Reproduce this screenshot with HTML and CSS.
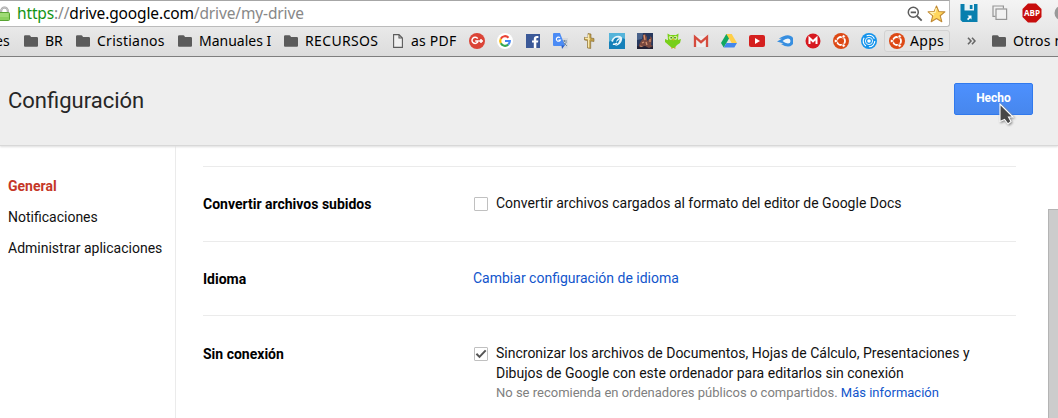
FILE: index.html
```html
<!DOCTYPE html>
<html lang="es">
<head>
<meta charset="utf-8">
<title>Configuración</title>
<link rel="stylesheet" href="styles.css">
</head>
<body>
<svg class="defs" width="0" height="0">
  <defs>
    <symbol id="folder" viewBox="0 0 14 12"><path d="M0 1.5Q0 .3 1.2 .3H5.2Q6.2 .3 6.6 1.3L7 2H12.8Q14 2 14 3.2V10.8Q14 11.8 13 11.8H1Q0 11.8 0 10.8Z" fill="#5b5b5b"/></symbol>
    <symbol id="ubuntu" viewBox="0 0 16 16"><circle cx="8" cy="8" r="8" fill="#dd4814"/><circle cx="8" cy="8" r="4" fill="none" stroke="#fff" stroke-width="1.8"/><g fill="#fff" stroke="#dd4814" stroke-width=".8"><circle cx="2.8" cy="8" r="1.7"/><circle cx="10.6" cy="3.4" r="1.7"/><circle cx="10.6" cy="12.6" r="1.7"/></g></symbol>
  </defs>
</svg>
<header class="browser">
  <div class="toolbar">
    <div class="address">
      <svg class="lock" width="10" height="16" viewBox="0 0 10 16"><path d="M1.2 8V4.7a3.3 3.3 0 0 1 6.6 0V8" fill="none" stroke="#999" stroke-width="2"/><path d="M1.2 8V4.7a3.3 3.3 0 0 1 6.6 0V8" fill="none" stroke="#ddd" stroke-width=".7"/><rect x="-3" y="6.5" width="12.5" height="8" rx="1" fill="#8bd05f" stroke="#58a433"/><path d="M0 8H8.5M0 10H8.5" stroke="#b3e58e"/></svg>
      <span class="url"><span class="scheme">https</span><span class="dim">://</span>drive.google.com<span class="dim">/drive/my-drive</span></span>
      <svg class="zoomicon" width="16" height="16" viewBox="0 0 16 16"><circle cx="6.3" cy="6.3" r="5" fill="none" stroke="#5c5c5c" stroke-width="1.5"/><path d="M3.7 6.3H9M10 10l4.7 4.7" stroke="#5c5c5c" stroke-width="1.8"/></svg>
      <svg class="star" width="19" height="18" viewBox="0 0 19 18"><path d="M9.5 1l2.3 5.5 6.1.4-4.7 3.8 1.6 6-5.3-3.2-5.3 3.2 1.6-6L1.1 6.9l6.1-.4z" fill="#ffd65c" stroke="#c18a35" stroke-width="1.1" stroke-linejoin="round"/><path d="M9.3 3L8 7.4 3.7 7.8l3.4 2.5" fill="none" stroke="#fff2b4" stroke-width="1.2"/></svg>
    </div>
    <div class="extensions">
      <svg width="18" height="18" viewBox="0 0 18 18"><path d="M.5 0H17.5V18H2.5L.5 16z" fill="#087fae"/><path d="M4.5 0H14V6.5H4.5z" fill="#e9f3f6"/><path d="M9.8 1H12.5V5H9.8z" fill="#087fae"/><path d="M7.5 11.5H11.5V15.5L10.2 14.3 8.2 16.2 7 15 9 13z" fill="#fff"/></svg>
      <svg width="16" height="16" viewBox="0 0 16 16" fill="none" stroke="#969696" stroke-width="1.2"><path d="M3.5 11.4H1V1H11.4V3.5"/><rect x="4" y="4" width="10.6" height="10.4" fill="#f2f2f2"/></svg>
      <svg width="20" height="20" viewBox="0 0 20 20"><path d="M6 .5h8L19.5 6v8L14 19.5H6L.5 14V6z" fill="#c70d0c"/><text class="abp" x="10" y="13.4" text-anchor="middle" textLength="16" lengthAdjust="spacingAndGlyphs">ABP</text></svg>
      <svg class="edge" width="4" height="16" viewBox="0 0 4 16"><circle cx="8" cy="8" r="7.5" fill="#999"/></svg>
    </div>
  </div>
  <nav class="bookmarks">
    <span class="bm-text cut">es</span>
    <svg class="folder"><use href="#folder"/></svg><span class="bm-text br">BR</span>
    <svg class="folder"><use href="#folder"/></svg><span class="bm-text cristianos">Cristianos</span>
    <svg class="folder"><use href="#folder"/></svg><span class="bm-text manuales">Manuales I</span>
    <svg class="folder"><use href="#folder"/></svg><span class="bm-text recursos">RECURSOS</span>
    <svg class="page" width="10" height="14" viewBox="0 0 10 14"><path d="M.6.6H6L9.4 4V13.4H.6zM6 .6V4H9.4" fill="#f0f0f0" stroke="#5b5b5b" stroke-width="1.1"/></svg><span class="bm-text pdf">as PDF</span>
    <div class="favicons">
      <svg viewBox="0 0 16 16"><circle cx="8" cy="8" r="8" fill="#db4437"/><path d="M8.7 5.6A3.1 3.1 0 1 0 9.1 8H6.2M10 8h4M12 6v4" fill="none" stroke="#fff" stroke-width="1.5"/></svg>
      <svg viewBox="0 0 16 16"><circle cx="8" cy="8" r="8" fill="#fff"/><g fill="none" stroke-width="2.2"><path d="M11.5 4.7A4.8 4.8 0 0 0 3.8 5.7" stroke="#ea4335"/><path d="M3.8 5.7a4.8 4.8 0 0 0 0 4.6" stroke="#fbbc05"/><path d="M3.8 10.3a4.8 4.8 0 0 0 7.4 1.3" stroke="#34a853"/><path d="M11.2 11.6A4.8 4.8 0 0 0 12.8 8H8" stroke="#4285f4"/></g></svg>
      <svg viewBox="0 0 16 16"><path d="M1 1H15V15H1z" fill="#3b5998"/><path d="M8.8 15V9.6H7V7.4h1.8V6c0-2 1.2-3 3-3h1.6v2.1h-1.1c-.8 0-1 .4-1 1.1v1.2h2l-.3 2.2h-1.7V15z" fill="#fff"/></svg>
      <svg viewBox="0 0 16 16"><path d="M7 5h8v10.5H9z" fill="#d5d8dc"/><path d="M9 8h5M11.5 7v2M10 13l3.5-4M10 9l4 4" stroke="#748aa0" fill="none"/><path d="M0 1Q0 0 1 0H7L12 13H1Q0 13 0 12z" fill="#4b8bf5"/><path d="M8.5 12.5h3L9 16z" fill="#2a5bc2"/><path d="M7 4.7A2.1 2.1 0 1 0 7.4 7H5.4" stroke="#fff" fill="none" stroke-width="1.2"/></svg>
      <svg viewBox="0 0 16 16"><path d="M7 .5L10 1V5l3 .5v3L9.7 8v7.5L6.5 15V7.5L3.5 7V4.3L7 5z" fill="#c0a04b" stroke="#83672c" stroke-width=".6"/><path d="M7.6 1.5v13M4 5.2l5 1" stroke="#f8e9af" stroke-width="1.3"/></svg>
      <svg viewBox="0 0 16 16"><path d="M0 0H16V16H0z" fill="#1680b9"/><path d="M0 0H16V6Q7 2 0 9z" fill="#55b4da"/><path d="M2 8Q5 2 11 3Q14 4 13 7Q12 12 6 13Q10 10 11 6L7 9Q8 5 11 5Q5 3 4 9z" fill="#eaf6fb"/><path d="M4 11Q6 12 8 10" fill="none" stroke="#fff" stroke-width="1.5"/></svg>
      <svg viewBox="0 0 16 16"><path d="M0 0H16V16H0z" fill="#28385d"/><path d="M0 0H6L5 6 0 7z" fill="#49628a"/><path d="M2 12L4 8 6 6 6 2 8 1 10 4 10 8 13 6 13 3 15 5 14 12 16 13V16H2z" fill="#79483f"/><path d="M7 2l1 5M5 10l2-1M9 9l1 3M13 6v3M3 13l3 1" stroke="#d69371" stroke-width="1.3"/><path d="M0 13L4 14 8 13 12 15 16 13V16H0z" fill="#222034"/></svg>
      <svg viewBox="0 0 16 16"><path d="M2.5.5L5 2h6l2.5-1.5L13 7l3-1-1 4-3 2-2.5 3H7l-3.5-3L0 9V6l3 1.3z" fill="#78cf19"/><circle cx="5.8" cy="4.8" r="2.1" fill="#cff48f"/><circle cx="10.4" cy="4.8" r="2.1" fill="#cff48f"/><circle cx="6.2" cy="4.8" r=".8" fill="#36501c"/><circle cx="10" cy="4.8" r=".8" fill="#36501c"/><path d="M7 6h2.4L8.2 7.8z" fill="#f5a623"/><path d="M6 15h1.7M9 15h1.7" stroke="#d69b20" stroke-width="1.2"/></svg>
      <svg viewBox="0 0 16 16"><path d="M1 3H15V14H1z" fill="#eee"/><path d="M2 14V4l6 5.2L14 4v10" fill="none" stroke="#d54b3d" stroke-width="2.3"/></svg>
      <svg viewBox="0 0 16 16"><path d="M5.3 1h5.3L5.4 10 2.7 14.6 0 10z" fill="#11a861"/><path d="M5.3 1h5.4L16 10h-5.3z" fill="#ffcf48"/><path d="M5.4 10H16l-2.7 4.6H2.7z" fill="#4387ed"/></svg>
      <svg viewBox="0 0 16 16"><rect y="2" width="16" height="12" rx="2" fill="#d5201f"/><path d="M6 5l5 3-5 3z" fill="#fff"/></svg>
      <svg viewBox="0 0 16 16"><path d="M0 8.5L5 5.8H1.8Q7 2 11 2.2A5.7 5.7 0 0 1 11 13.6Q8 13.5 4 11L6.5 10.6Z" fill="#368ee0"/><path d="M5.5 8Q8 5.4 11 5.4a2.5 2.5 0 0 1 0 5Q8 10.4 5.5 8z" fill="#f1f6fa"/></svg>
      <svg viewBox="0 0 16 16"><circle cx="8" cy="8" r="7.5" fill="#d71920"/><path d="M4.5 11V5L8 8.3 11.5 5v6" fill="none" stroke="#fff" stroke-width="2"/></svg>
      <svg><use href="#ubuntu"/></svg>
      <svg viewBox="0 0 16 16"><circle cx="8" cy="8" r="8" fill="#1594ec"/><circle cx="8" cy="8" r="1.8" fill="#fff"/><g fill="none" stroke="#fff"><circle cx="8" cy="8" r="3.6" stroke-width=".9"/><circle cx="8" cy="8" r="5.8" stroke-width="1.1" stroke-dasharray="9 3.1"/></g></svg>
    </div>
    <div class="apps"><svg width="16" height="16"><use href="#ubuntu"/></svg><span class="bm-text">Apps</span></div>
    <svg class="chevrons" width="9" height="8" viewBox="0 0 9 8"><path d="M1 .7L4 4 1 7.3M5 .7L8 4 5 7.3" fill="none" stroke="#666" stroke-width="1.6"/></svg>
    <div class="separator"></div>
    <svg class="folder"><use href="#folder"/></svg><span class="bm-text otros">Otros m</span>
  </nav>
</header>
<div class="dialog-head">
  <h1>Configuración</h1>
  <button class="done">Hecho</button>
  <svg class="cursor" width="16" height="24" viewBox="0 0 16 24"><path d="M1 1V18.5L5.5 16.5 9 21 12 18.5 9.5 14H14z" fill="#484848" stroke="#fff" stroke-width="1.1"/></svg>
</div>
<div class="content">
  <nav class="sidebar"><a class="active">General</a><a>Notificaciones</a><a>Administrar aplicaciones</a></nav>
  <main>
    <section class="row"><h2>Convertir archivos subidos</h2><div class="option"><span class="box"></span><div class="label convert">Convertir archivos cargados al formato del editor de Google Docs</div></div></section>
    <section class="row"><h2>Idioma</h2><a class="link">Cambiar configuración de idioma</a></section>
    <section class="row"><h2>Sin conexión</h2><div class="option"><span class="box"><svg width="14" height="14" viewBox="0 0 14 14"><path d="M2.4 6.7l3.1 3.2 6.2-6.5" fill="none" stroke="#555" stroke-width="2"/></svg></span><div class="label">Sincronizar los archivos de Documentos, Hojas de Cálculo, Presentaciones y<br>Dibujos de Google con este ordenador para editarlos sin conexión<p>No se recomienda en ordenadores públicos o compartidos. <a class="link">Más información</a></p></div></div></section>
  </main>
  <div class="scroll"><div class="thumb"></div></div>
</div>
</body>
</html>
```

FILE: styles.css
```css
* { box-sizing: border-box; }
body { margin: 0; width: 1058px; height: 418px; overflow: hidden; background: #fff; font: 14px/20px Roboto, sans-serif; color: #111; }
svg { display: block; flex: none; }
.defs { position: absolute; }
.browser { height: 57px; background: linear-gradient(#f4f4f4, #e9e9e9 27px, #dcdcdc 56px); border-bottom: 1px solid #777; font-family: "Noto Sans", sans-serif; }
.toolbar { display: flex; height: 27px; }
.address { display: flex; align-items: center; width: 950px; height: 27px; background: #fff; border: 1px solid #bbb; border-top-color: #a6a6a6; border-left: 0; border-radius: 0 0 3px 0; }
.url { width: 880px; margin-left: 7px; padding-bottom: 2px; font-size: 15.5px; letter-spacing: -.14px; color: #000; white-space: nowrap; }
.scheme { color: #149414; }
.dim { color: #888; }
.zoomicon { margin-left: 10px; }
.star { margin-left: 4px; }
.extensions { display: flex; align-items: center; height: 26px; padding-left: 10px; }
.extensions svg + svg { margin-left: 14px; }
.extensions .edge { margin-left: 12px; }
.abp { font: bold 8.5px "Open Sans", sans-serif; fill: #fff; }
.bookmarks { display: flex; align-items: center; height: 28px; overflow: hidden; }
.bm-text { flex: none; font-size: 14px; line-height: 20px; white-space: nowrap; color: #000; }
.folder { width: 14px; height: 12px; margin-right: 7px; }
.cut { width: 24px; margin-left: -5px; margin-right: 5px; }
.br { width: 31px; }
.cristianos { width: 81px; letter-spacing: .25px; }
.manuales { width: 85px; }
.recursos { width: 88px; letter-spacing: .35px; }
.page { margin-right: 8px; }
.pdf { width: 58px; letter-spacing: .2px; }
.favicons { display: flex; gap: 12px; }
.favicons svg { width: 16px; height: 16px; }
.apps { display: flex; align-items: center; gap: 5px; flex: none; width: 66px; height: 22px; margin-left: 7px; padding-left: 4px; border: 1px solid #d2d2d2; border-radius: 3px; background: #e4e4e4; letter-spacing: .3px; }
.chevrons { margin-left: 17px; }
.separator { width: 1px; height: 20px; margin: 0 8px; background: #c6d4df; }
.otros { letter-spacing: .2px; }
.dialog-head { position: relative; display: flex; justify-content: space-between; height: 89px; padding: 26px 25px 0 8px; background: #eee; border-bottom: 1px solid #d8d8d8; box-shadow: 0 1px 2px #ddd; }
h1 { margin: 5px 0 0; font-size: 22px; line-height: 26px; font-weight: 400; color: #262626; }
.done { width: 79px; height: 32px; padding: 0 0 2px; border: 1px solid #3079ed; border-radius: 2px; background: linear-gradient(#4d90fe, #4787ed); color: #fff; font: bold 12px Roboto, sans-serif; }
.cursor { position: absolute; left: 999px; top: 46px; filter: drop-shadow(1px 1px 1px #888); }
.content { display: flex; height: 272px; }
.sidebar { display: flex; flex-direction: column; gap: 11px; width: 176px; padding: 30px 0 0 8px; border-right: 1px solid #ebebeb; white-space: nowrap; }
.active { color: #c53727; font-weight: 700; }
main { width: 813px; margin: 20px 0 0 27px; }
.row { display: flex; height: 75px; padding-top: 26px; border-top: 1px solid #ebebeb; white-space: nowrap; }
.row:nth-child(2) { height: 74px; }
.row:nth-child(3) { padding-top: 27px; }
h2 { width: 270px; margin: 1px 0 0; flex: none; font-size: 14px; line-height: 20px; color: #000; }
.link { color: #15c; }
.option { display: flex; }
.box { width: 14px; height: 14px; margin: 4px 8px 0 1px; border: 1px solid #c0c0c0; border-radius: 1px; flex: none; }
.box svg { margin: -1px; }
.label p { margin: 0; font-size: 13px; line-height: 19px; color: #808080; }
.scroll { display: flex; margin-left: auto; padding-top: 63px; }
.thumb { width: 10px; background: #ccc; border: 1px solid #b4b4b4; border-width: 1px 0 0 1px; }
```
